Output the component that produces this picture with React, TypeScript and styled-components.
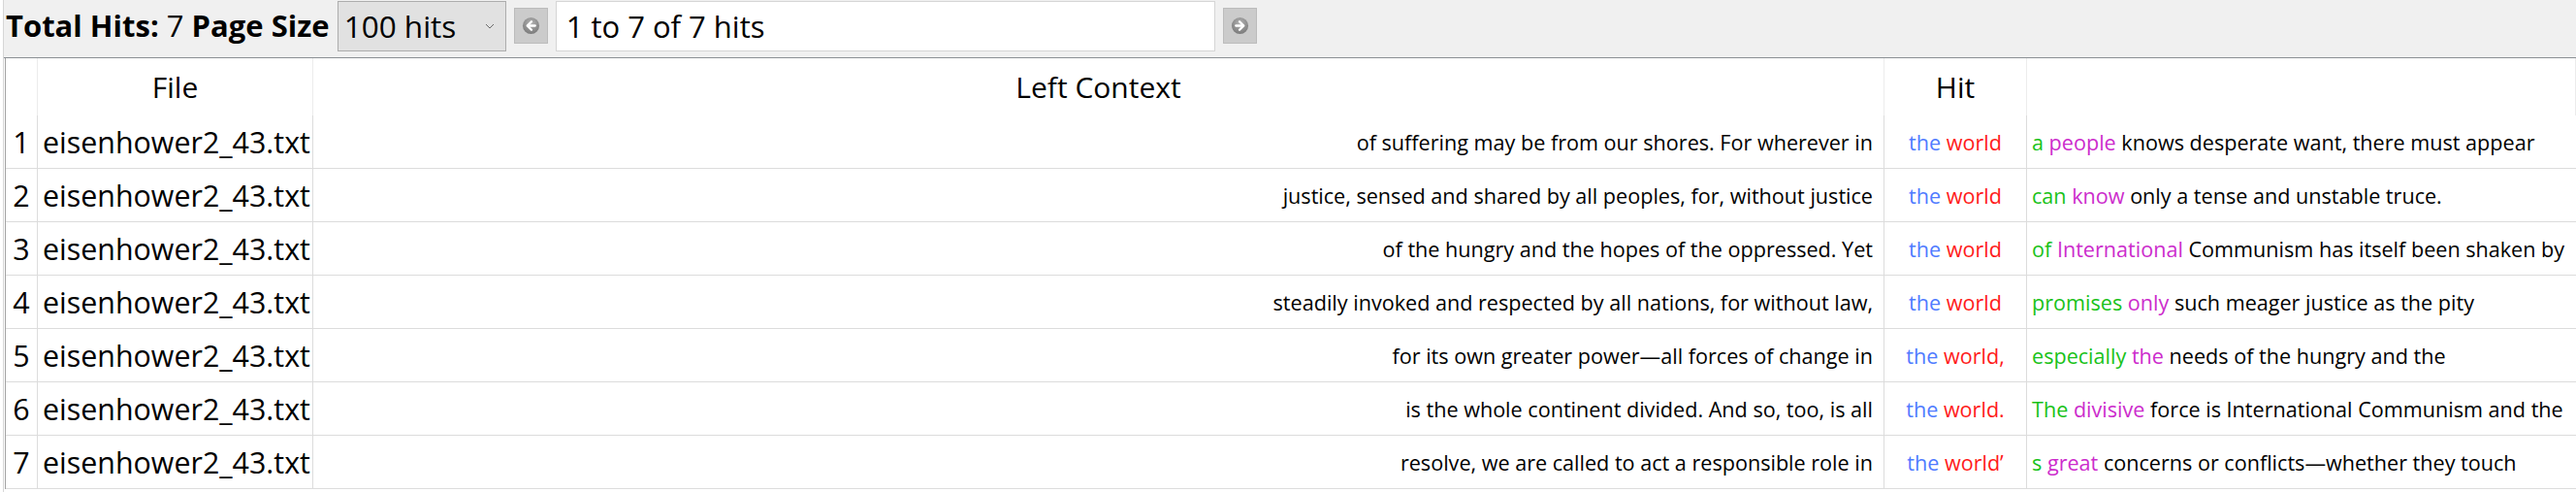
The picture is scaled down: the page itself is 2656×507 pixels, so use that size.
import React from "react";
import styled, { createGlobalStyle } from "styled-components";

type Hit = {
  left: string;
  the: string;
  world: string;
  first: string;
  second: string;
  rest: string;
};

const FONT = `"Open Sans", "Noto Sans", "Liberation Sans", sans-serif`;

const hits: Hit[] = [
  {
    left: "of suffering may be from our shores. For wherever in",
    the: "the",
    world: "world",
    first: "a",
    second: "people",
    rest: "knows desperate want, there must appear",
  },
  {
    left: "justice, sensed and shared by all peoples, for, without justice",
    the: "the",
    world: "world",
    first: "can",
    second: "know",
    rest: "only a tense and unstable truce.",
  },
  {
    left: "of the hungry and the hopes of the oppressed. Yet",
    the: "the",
    world: "world",
    first: "of",
    second: "International",
    rest: "Communism has itself been shaken by",
  },
  {
    left: "steadily invoked and respected by all nations, for without law,",
    the: "the",
    world: "world",
    first: "promises",
    second: "only",
    rest: "such meager justice as the pity",
  },
  {
    left: "for its own greater power\u2014all forces of change in",
    the: "the",
    world: "world,",
    first: "especially",
    second: "the",
    rest: "needs of the hungry and the",
  },
  {
    left: "is the whole continent divided. And so, too, is all",
    the: "the",
    world: "world.",
    first: "The",
    second: "divisive",
    rest: "force is International Communism and the",
  },
  {
    left: "resolve, we are called to act a responsible role in",
    the: "the",
    world: "world\u2019",
    first: "s",
    second: "great",
    rest: "concerns or conflicts\u2014whether they touch",
  },
];

const GlobalStyle = createGlobalStyle`
  html, body {
    margin: 0;
    padding: 0;
    background: #ffffff;
    overflow: hidden;
  }
  body {
    font-family: ${FONT};
    color: #000;
  }
`;

const Frame = styled.div`
  margin-left: 3px;
  border-left: 1px solid #d6d6d6;
  height: 507px;
  background: #ffffff;
`;

const Toolbar = styled.div`
  display: flex;
  align-items: center;
  gap: 8px;
  height: 60px;
  box-sizing: border-box;
  padding: 1px 0 7px 2px;
  background: #f0f0f0;
  border-bottom: 1px solid #8b8f94;
`;

const Summary = styled.div`
  font-size: 31px;
  line-height: 1;
  white-space: nowrap;
  b {
    font-weight: 700;
  }
`;

const SizeSelect = styled.div`
  display: flex;
  align-items: center;
  justify-content: space-between;
  width: 174px;
  height: 52px;
  box-sizing: border-box;
  padding: 0 11px 0 6px;
  background: #e1e1e1;
  border: 1px solid #adadad;
  font-size: 31.5px;
  white-space: nowrap;
`;

const NavButton = styled.button`
  display: flex;
  align-items: center;
  justify-content: center;
  width: 35px;
  height: 37px;
  padding: 0;
  background: #cbcbcb;
  border: 1px solid #bcbcbc;
`;

const PageField = styled.div`
  display: flex;
  align-items: center;
  width: 680px;
  height: 52px;
  box-sizing: border-box;
  padding-left: 10px;
  background: #ffffff;
  border: 1px solid #d5d5d5;
  font-size: 31px;
  white-space: nowrap;
`;

const Grid = styled.div`
  display: grid;
  grid-template-columns: 33px 284px 1620px 147px 1fr;
  margin-left: 1px;
  border-left: 1px solid #a3a3a3;
`;

const HeadCell = styled.div`
  display: flex;
  align-items: center;
  justify-content: center;
  height: 59px;
  box-sizing: border-box;
  border-right: 1px solid #ececec;
  font-size: 30px;
  white-space: nowrap;
  &:last-child {
    border-right: none;
  }
`;

const Cell = styled.div<{ $align: "left" | "center" | "right"; $big?: boolean }>`
  display: flex;
  align-items: center;
  justify-content: ${(p) =>
    p.$align === "left" ? "flex-start" : p.$align === "right" ? "flex-end" : "center"};
  height: 55px;
  box-sizing: border-box;
  padding: ${(p) =>
    p.$align === "left" ? "0 0 0 5px" : p.$align === "right" ? "0 11px 0 0" : "0"};
  border-right: 1px solid #dcdcdc;
  border-bottom: 1px solid #dcdcdc;
  font-size: ${(p) => (p.$big ? "30.4px" : "21.6px")};
  white-space: nowrap;
  overflow: hidden;
  &:nth-child(5n) {
    border-right: none;
  }
`;

const Word = styled.span<{ $color: string }>`
  color: ${(p) => p.$color};
`;

const ChevronIcon = () => (
  <svg width="10" height="6" viewBox="0 0 10 6">
    <path d="M1 1 L5 5 L9 1" stroke="#6a6a6a" strokeWidth="1" fill="none" />
  </svg>
);

const ArrowIcon = ({ dir }: { dir: "left" | "right" }) => (
  <svg width="19" height="19" viewBox="0 0 20 20">
    <defs>
      <radialGradient id={`g-${dir}`} cx="50%" cy="35%" r="65%">
        <stop offset="0%" stopColor="#b4b4b4" />
        <stop offset="100%" stopColor="#7a7a7a" />
      </radialGradient>
    </defs>
    <circle cx="10" cy="10" r="9" fill={`url(#g-${dir})`} />
    <g
      transform={dir === "right" ? "translate(20 0) scale(-1 1)" : undefined}
      stroke="#ffffff"
      strokeWidth="2.4"
      fill="none"
      strokeLinecap="round"
      strokeLinejoin="round"
    >
      <path d="M10.5 5.5 L6 10 L10.5 14.5" />
      <path d="M6.5 10 H14.5" />
    </g>
  </svg>
);

const App: React.FC = () => {
  return (
    <Frame>
      <GlobalStyle />
      <Toolbar>
        <Summary>
          <b>Total Hits:</b> 7 <b>Page Size</b>
        </Summary>
        <SizeSelect>
          <span>100 hits</span>
          <ChevronIcon />
        </SizeSelect>
        <NavButton aria-label="previous page">
          <ArrowIcon dir="left" />
        </NavButton>
        <PageField>1 to 7 of 7 hits</PageField>
        <NavButton aria-label="next page">
          <ArrowIcon dir="right" />
        </NavButton>
      </Toolbar>
      <Grid>
        <HeadCell />
        <HeadCell>File</HeadCell>
        <HeadCell>Left Context</HeadCell>
        <HeadCell>Hit</HeadCell>
        <HeadCell />
        {hits.map((h, i) => (
          <React.Fragment key={i}>
            <Cell $align="center" $big>
              {i + 1}
            </Cell>
            <Cell $align="left" $big>
              eisenhower2_43.txt
            </Cell>
            <Cell $align="right">{h.left}</Cell>
            <Cell $align="center">
              <Word $color="#4f7bff">{h.the}</Word>&nbsp;
              <Word $color="#ff1a1a">{h.world}</Word>
            </Cell>
            <Cell $align="left">
              <Word $color="#19c219">{h.first}</Word>&nbsp;
              <Word $color="#cc2ccc">{h.second}</Word>&nbsp;{h.rest}
            </Cell>
          </React.Fragment>
        ))}
      </Grid>
    </Frame>
  );
};

export default App;
